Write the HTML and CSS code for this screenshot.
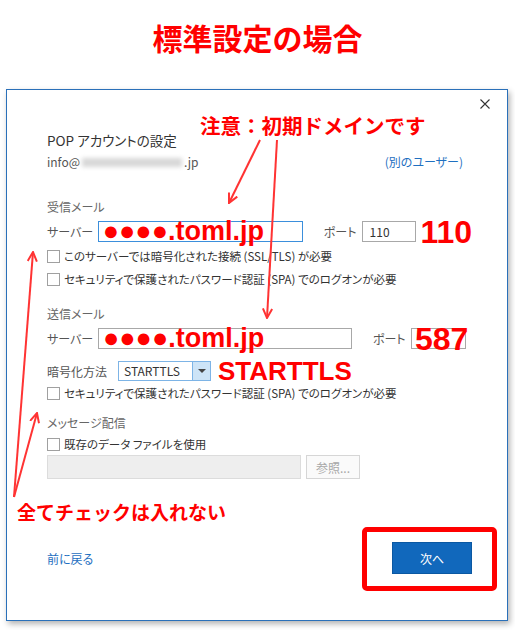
FILE: index.html
```html
<!DOCTYPE html>
<html lang="ja">
<head>
    <meta charset="UTF-8">
    <meta name="viewport" content="width=device-width, initial-scale=1.0">
    <title>標準設定の場合</title>
    <link rel="stylesheet" href="styles.css">
</head>
<body>
<div class="page">

    <h1 class="title">標準設定の場合</h1>

    <!-- POP account dialog -->
    <div class="dialog">
        <div class="dialog-bar">
            <svg class="close" width="10" height="10" viewBox="0 0 10 10">
                <path d="M0.5 0.5 L9.5 9.5 M9.5 0.5 L0.5 9.5" stroke="#333" stroke-width="1.1" fill="none"/>
            </svg>
        </div>

        <div class="dialog-body">
            <div class="heading">POP アカウントの設定</div>
            <div class="account-row">
                <span class="account">info@<span class="blur"></span>.jp</span>
                <span class="link other-user">(別のユーザー)</span>
            </div>

            <!-- Incoming mail -->
            <div class="section-label first">受信メール</div>
            <div class="field-row">
                <span class="field-label">サーバー</span>
                <div class="text-box server focused"><span class="domain">●●●●.toml.jp</span></div>
                <span class="port-label">ポート</span>
                <div class="text-box port">110</div>
                <span class="mark mark-port">110</span>
            </div>
            <label class="check-row">
                <span class="checkbox"></span>このサーバーでは暗号化された接続 (SSL/TLS) が必要
            </label>
            <label class="check-row">
                <span class="checkbox"></span>セキュリティで保護されたパスワード認証 (SPA) でのログオンが必要
            </label>

            <!-- Outgoing mail -->
            <div class="section-label">送信メール</div>
            <div class="field-row">
                <span class="field-label">サーバー</span>
                <div class="text-box server wide"><span class="domain">●●●●.toml.jp</span></div>
                <span class="port-label">ポート</span>
                <div class="text-box port"></div>
            </div>
            <div class="field-row crypt-row">
                <span class="field-label crypt-label">暗号化方法</span>
                <div class="select">
                    <span class="select-value">STARTTLS</span>
                    <span class="select-arrow"></span>
                </div>
                <span class="mark mark-tls">STARTTLS</span>
            </div>
            <label class="check-row tight">
                <span class="checkbox"></span>セキュリティで保護されたパスワード認証 (SPA) でのログオンが必要
            </label>

            <!-- Delivery -->
            <div class="section-label delivery">メッセージ配信</div>
            <label class="check-row tight">
                <span class="checkbox"></span>既存のデータ ファイルを使用
            </label>
            <div class="file-row">
                <div class="file-box"></div>
                <button class="browse" disabled>参照...</button>
            </div>

            <div class="footer">
                <span class="link">前に戻る</span>
                <button class="next">次へ</button>
            </div>
        </div>
    </div>

    <!-- Annotations -->
    <div class="note note-domain">注意：初期ドメインです</div>
    <div class="note note-check">全てチェックは入れない</div>
    <div class="mark mark-587">587</div>
    <div class="frame"></div>

    <svg class="arrows" width="515" height="630" viewBox="0 0 515 630">
        <defs>
            <marker id="head" viewBox="0 0 10 10" refX="9" refY="5" markerWidth="11" markerHeight="11" markerUnits="userSpaceOnUse" orient="auto">
                <path d="M0.5 0.8 L9 5 L0.5 9.2" fill="none" stroke="#f33" stroke-width="1.8"/>
            </marker>
        </defs>
        <g stroke="#f33" stroke-width="2" fill="none" marker-end="url(#head)">
            <line x1="260" y1="140" x2="229" y2="203"/>
            <line x1="277" y1="140" x2="267" y2="318"/>
            <line x1="14" y1="497" x2="33" y2="252"/>
            <line x1="14" y1="497" x2="37" y2="413"/>
        </g>
    </svg>

</div>
</body>
</html>
```

FILE: styles.css
```css
/* General Styling */
body {
    margin: 0;
    background-color: #ffffff;
    font-family: "Noto Sans CJK JP", "Noto Sans", sans-serif;
    color: #333;
}

.page {
    position: relative;
    width: 515px;
    height: 630px;
    overflow: hidden;
}

.title {
    margin: 0;
    padding-top: 17px;
    font-size: 30px;
    line-height: 40px;
    font-weight: 700;
    color: #ff0000;
    text-align: center;
}

/* Dialog */
.dialog {
    width: 502px;
    margin: 32px 0 0 6px;
    box-sizing: border-box;
    border: 1px solid #2a70b9;
    background-color: #ffffff;
    box-shadow: 2px 3px 6px rgba(0, 0, 0, 0.3);
    font-feature-settings: "palt";
}

.dialog-bar {
    height: 28px;
    display: flex;
    align-items: center;
    justify-content: flex-end;
    padding-right: 17px;
}

.dialog-body {
    padding: 0 35px 46px 40px;
}

.heading {
    margin-top: 12px;
    font-size: 13.5px;
    line-height: 20px;
    color: #333;
}

.account-row {
    margin-top: 3px;
    display: flex;
    justify-content: space-between;
    font-size: 12px;
    line-height: 18px;
    color: #555;
}

.blur {
    display: inline-block;
    width: 100px;
    height: 9px;
    margin: 0 2px;
    background-color: #d8d8d8;
    filter: blur(2px);
}

.link {
    color: #1f70c1;
    font-size: 12px;
}

.other-user {
    margin-right: 9px;
}

.section-label {
    margin-top: 17px;
    font-size: 12px;
    line-height: 18px;
    color: #666;
}

.section-label.first {
    margin-top: 27px;
}

.section-label.delivery {
    margin-top: 12px;
}

/* Field rows */
.field-row {
    margin-top: 5px;
    height: 21px;
    display: flex;
    align-items: center;
    font-size: 12px;
}

.field-label {
    width: 51px;
    color: #555;
}

.text-box {
    height: 21px;
    box-sizing: border-box;
    border: 1px solid #a8a8a8;
    display: flex;
    align-items: center;
    overflow: visible;
    white-space: nowrap;
}

.text-box.focused {
    border-color: #3b8fdc;
}

.server {
    width: 206px;
    padding-left: 4px;
}

.server.wide {
    width: 254px;
}

.port-label {
    width: 38px;
    margin-left: 21px;
    color: #555;
}

.port {
    width: 55px;
    padding-left: 7px;
    color: #333;
}

.domain {
    font-family: "Liberation Sans", sans-serif;
    font-weight: 700;
    font-size: 27px;
    line-height: 1;
    color: #ff0000;
}

.mark {
    font-family: "Liberation Sans", sans-serif;
    font-weight: 700;
    color: #ff0000;
    line-height: 1;
}

.mark-port {
    margin-left: 4px;
    font-size: 32px;
}

.mark-tls {
    margin-left: 7px;
    font-size: 26px;
}

.crypt-row {
    margin-top: 12px;
    height: 20px;
}

.crypt-label {
    width: 71px;
}

.select {
    width: 93px;
    height: 20px;
    box-sizing: border-box;
    border: 1px solid #7db4e6;
    display: flex;
}

.select-value {
    flex: 1;
    padding-left: 5px;
    line-height: 18px;
    color: #333;
}

.select-arrow {
    width: 17px;
    background-color: #cde4f7;
    border-left: 1px solid #7db4e6;
    position: relative;
}

.select-arrow::after {
    content: "";
    position: absolute;
    left: 5px;
    top: 7px;
    border-left: 4px solid transparent;
    border-right: 4px solid transparent;
    border-top: 4px solid #444;
}

/* Checkboxes */
.check-row {
    margin-top: 5px;
    height: 18px;
    display: flex;
    align-items: center;
    font-size: 11.5px;
    color: #333;
    white-space: nowrap;
}

.check-row.tight {
    margin-top: 3px;
}

.checkbox {
    width: 13px;
    height: 13px;
    box-sizing: border-box;
    border: 1px solid #a0a0a0;
    background-color: #fff;
    margin-right: 4px;
}

/* Data file */
.file-row {
    margin-top: 2px;
    height: 24px;
    display: flex;
    gap: 5px;
}

.file-box {
    width: 254px;
    box-sizing: border-box;
    border: 1px solid #dcdcdc;
    background-color: #eeeeee;
}

.browse {
    width: 54px;
    padding: 0;
    border: 1px solid #d6d6d6;
    background-color: #fafafa;
    color: #a8a8a8;
    font-family: inherit;
    font-size: 12px;
}

/* Footer */
.footer {
    margin-top: 63px;
    height: 32px;
    display: flex;
    align-items: center;
    justify-content: space-between;
}

.next {
    width: 80px;
    height: 32px;
    border: 1px solid #0b58a2;
    background-color: #1168bc;
    color: #ffffff;
    font-family: inherit;
    font-size: 12px;
}

/* Annotations */
.note {
    position: absolute;
    font-weight: 700;
    color: #ff0000;
    line-height: 1;
    white-space: nowrap;
}

.note-domain {
    left: 200px;
    top: 115px;
    font-size: 20.5px;
}

.note-check {
    left: 17px;
    top: 502px;
    font-size: 19px;
}

.mark-587 {
    position: absolute;
    left: 415px;
    top: 323px;
    font-size: 32px;
}

.frame {
    position: absolute;
    left: 362px;
    top: 527px;
    width: 135px;
    height: 64px;
    box-sizing: border-box;
    border: 5px solid #ff0000;
    border-radius: 5px;
}

.arrows {
    position: absolute;
    left: 0;
    top: 0;
    pointer-events: none;
}
```
